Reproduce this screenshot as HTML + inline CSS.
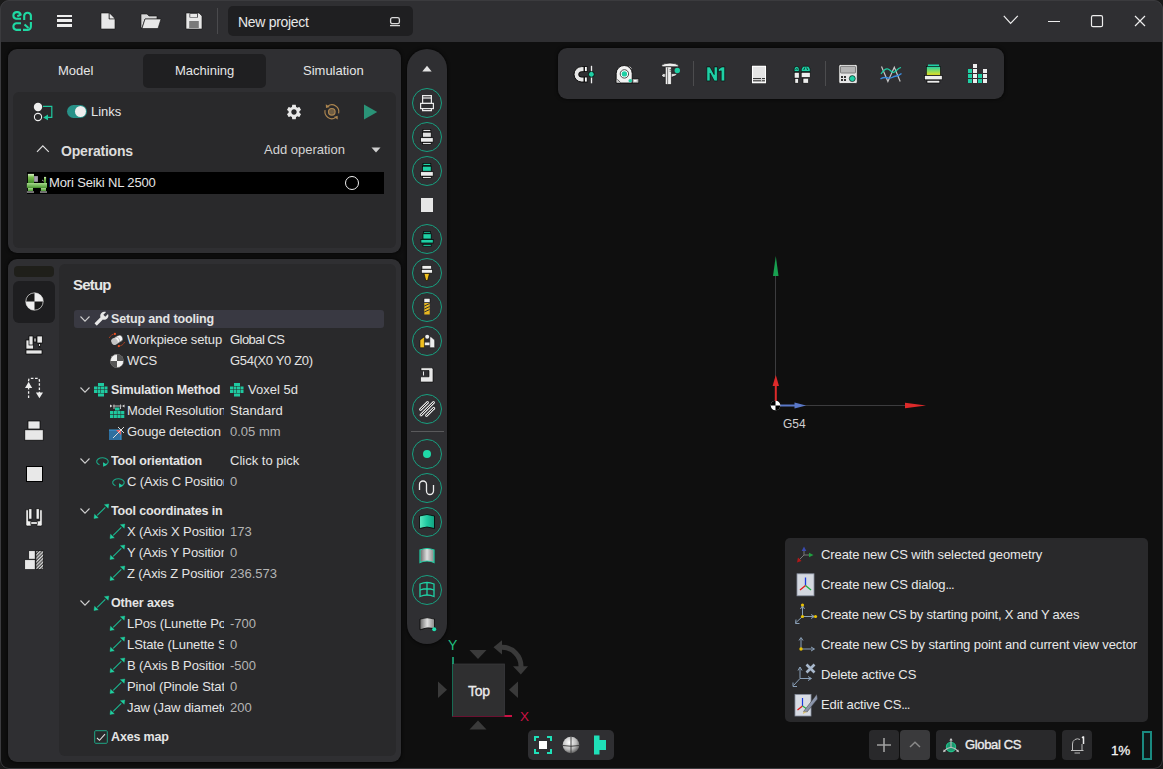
<!DOCTYPE html>
<html><head><meta charset="utf-8">
<style>
*{margin:0;padding:0;box-sizing:border-box}
html,body{width:1163px;height:769px;overflow:hidden;background:#1a1a1a}
body{font-family:"Liberation Sans",sans-serif;color:#e6e6e6;font-size:13px;position:relative}
.a{position:absolute}
#win{position:absolute;left:0;top:0;width:1163px;height:769px;background:#0f0f0f;overflow:hidden;border-radius:9px}
#frame{position:absolute;left:0;top:0;width:1163px;height:769px;border:1px solid #3b3b3e;border-radius:9px;pointer-events:none}
#title{position:absolute;left:0;top:0;width:1163px;height:42px;background:#2f2f32}
.panel{position:absolute;background:#2f2f32;border-radius:9px;box-shadow:0 0 3px 1px rgba(0,0,0,0.55)}
.inner{position:absolute;background:#29292b;border-radius:6px}
.t{position:absolute;white-space:nowrap;line-height:1}
svg{position:absolute;overflow:visible}
.lbl{position:absolute;white-space:nowrap;overflow:hidden;line-height:16px;height:16px;font-size:13px;color:#e4e4e4}
.val{position:absolute;white-space:nowrap;line-height:16px;height:16px;font-size:13px;color:#e4e4e4;left:230px}
.grey{color:#b4b4b4}
.b{font-weight:bold}
</style></head><body>
<div id="win">
 <div id="title">
  <!-- logo -->
  <svg style="left:0;top:0" width="40" height="42" viewBox="0 0 40 42" fill="none" stroke="#1fd9a3" stroke-width="2.1" stroke-linecap="butt">
   <path d="M21,18.8 H16.2 A3.4,3.4 0 0 1 16.2,12.1 H17.6 A3.2,3.2 0 0 1 20.6,14.6 L17.3,16.2"/>
   <path d="M24.2,20 V15.5 A3.4,3.4 0 0 1 30.9,15.5 V20"/>
   <path d="M21,23.2 H16.2 A3.4,3.4 0 0 0 16.2,29.9 H21"/>
   <path d="M30.9,22 V26.5 A3.4,3.4 0 0 1 27.5,29.9 H23"/>
   <path d="M24.5,24.5 L28.5,28"/>
  </svg>
  <!-- hamburger -->
  <div class="a" style="left:57px;top:14.5px;width:15px;height:2.4px;background:#eee"></div>
  <div class="a" style="left:57px;top:19.4px;width:15px;height:2.4px;background:#eee"></div>
  <div class="a" style="left:57px;top:24.3px;width:15px;height:2.4px;background:#eee"></div>
  <!-- file -->
  <svg style="left:100px;top:12px" width="16" height="18" viewBox="0 0 16 18"><path d="M1,1 H9 L15,7 V17 H1 Z" fill="#e8e8e8" stroke="#111" stroke-width="0.6"/><path d="M9,1 V7 H15" fill="#2f2f32" stroke="#111" stroke-width="0.6"/><path d="M9.6,1.5 L14.5,6.4 H9.6 Z" fill="#e8e8e8"/></svg>
  <!-- folder -->
  <svg style="left:140px;top:12px" width="22" height="18" viewBox="0 0 22 18"><path d="M1,2 H7 L9,4 H17 V7 H5 L2,16 H1 Z" fill="#d8d8d8" stroke="#111" stroke-width="0.6"/><path d="M5,7 H21 L18,16.5 H2 Z" fill="#e8e8e8" stroke="#111" stroke-width="0.6"/></svg>
  <!-- save -->
  <svg style="left:185px;top:12px" width="18" height="18" viewBox="0 0 18 18"><path d="M1,1 H14 L17,4 V17 H1 Z" fill="#e8e8e8" stroke="#111" stroke-width="0.6"/><rect x="4.5" y="1.3" width="8.5" height="4.2" fill="#2f2f32"/><rect x="5.2" y="2" width="7" height="3" fill="#e8e8e8"/><rect x="4.2" y="9" width="9.6" height="7" fill="#7a7a7a"/></svg>
  <div class="a" style="left:217px;top:8px;width:1px;height:26px;background:#4a4a4d"></div>
  <div class="a" style="left:228px;top:6px;width:185px;height:30px;background:#1f1f21;border-radius:5px"></div>
  <div class="t" style="left:238px;top:15px;font-size:14px;color:#e8e8e8;letter-spacing:-0.3px">New project</div>
  <svg style="left:389px;top:16px" width="12" height="11" viewBox="0 0 12 11" fill="none" stroke="#d8d8d8" stroke-width="1.3"><rect x="1.6" y="1.6" width="8.8" height="6.1" rx="1.8"/><path d="M1,9.6 H11"/></svg>
  <!-- window controls -->
  <svg style="left:1003px;top:15px" width="16" height="10" viewBox="0 0 16 10" fill="none" stroke="#eee" stroke-width="1.2"><path d="M0.8,0.8 L7.6,8.4 L14.8,0.8"/></svg>
  <div class="a" style="left:1048px;top:21px;width:12px;height:1.2px;background:#eee"></div>
  <svg style="left:1090px;top:15px" width="13" height="13" viewBox="0 0 13 13" fill="none" stroke="#eee" stroke-width="1.2"><rect x="1.5" y="0.7" width="11" height="11" rx="1.5"/></svg>
  <svg style="left:1134px;top:15px" width="12" height="12" viewBox="0 0 12 12" fill="none" stroke="#eee" stroke-width="1.2"><path d="M1,1 L11,11 M11,1 L1,11"/></svg>
 </div>

 <!-- top-left panel -->
 <div class="panel" style="left:8px;top:49px;width:393px;height:204px"></div>
 <div class="a" style="left:143px;top:54px;width:123px;height:34px;background:#1f1f21;border-radius:5px"></div>
 <div class="t" style="left:58px;top:64px;font-size:13px">Model</div>
 <div class="t" style="left:175px;top:64px;font-size:13px">Machining</div>
 <div class="t" style="left:303px;top:64px;font-size:13px">Simulation</div>
 <div class="inner" style="left:13px;top:92px;width:383px;height:156px"></div>
 <!-- links icon -->
 <svg style="left:30px;top:100px" width="24" height="24" viewBox="0 0 24 24">
  <circle cx="8" cy="7" r="4.2" fill="#eee"/>
  <circle cx="8" cy="17" r="3.6" fill="none" stroke="#eee" stroke-width="1.1"/>
  <path d="M13,6.3 H21.8 V17.4 H15" fill="none" stroke="#1fc9a0" stroke-width="1.2"/>
  <path d="M13.2,17.4 L18,14.6 V20.2 Z" fill="#1fc9a0"/>
 </svg>
 <!-- toggle -->
 <div class="a" style="left:67px;top:105px;width:20px;height:13px;border-radius:7px;background:#289188"></div>
 <div class="a" style="left:75px;top:106px;width:11px;height:11px;border-radius:6px;background:#eee"></div>
 <div class="t" style="left:91px;top:105px;font-size:13px">Links</div>
 <!-- gear -->
 <svg style="left:285px;top:103px" width="18" height="18" viewBox="0 0 24 24"><path fill="#e8e8e8" d="M19.14,12.94c0.04-0.3,0.06-0.61,0.06-0.94c0-0.32-0.02-0.64-0.07-0.94l2.03-1.58c0.18-0.14,0.23-0.41,0.12-0.61 l-1.92-3.32c-0.12-0.22-0.37-0.29-0.59-0.22l-2.39,0.96c-0.5-0.38-1.03-0.7-1.62-0.94L14.4,2.81c-0.04-0.24-0.24-0.41-0.48-0.41 h-3.84c-0.24,0-0.43,0.17-0.47,0.41L9.25,5.35C8.66,5.59,8.12,5.92,7.63,6.29L5.24,5.33c-0.22-0.08-0.47,0-0.59,0.22L2.74,8.87 C2.62,9.08,2.66,9.34,2.86,9.48l2.03,1.58C4.84,11.36,4.8,11.69,4.8,12s0.02,0.64,0.07,0.94l-2.03,1.58 c-0.18,0.14-0.23,0.41-0.12,0.61l1.92,3.32c0.12,0.22,0.37,0.29,0.59,0.22l2.39-0.96c0.5,0.38,1.03,0.7,1.62,0.94l0.36,2.54 c0.05,0.24,0.24,0.41,0.48,0.41h3.84c0.24,0,0.44-0.17,0.47-0.41l0.36-2.54c0.59-0.24,1.13-0.56,1.62-0.94l2.39,0.96 c0.22,0.08,0.47,0,0.59-0.22l1.92-3.32c0.12-0.22,0.07-0.47-0.12-0.61L19.14,12.94z M12,15.6c-1.98,0-3.6-1.62-3.6-3.6 s1.62-3.6,3.6-3.6s3.6,1.62,3.6,3.6S13.98,15.6,12,15.6z"/></svg>
 <!-- recycle -->
 <svg style="left:318px;top:98px" width="28" height="28" viewBox="318 98 28 28"><g fill="none" stroke="#ad8650" stroke-width="1.15"><path d="M327.8,106.2 A6.9,6.9 0 0 1 338.6,113.4"/><path d="M325.1,110.2 A6.9,6.9 0 0 0 335.8,117.4"/><circle cx="331.8" cy="111.8" r="3.3" fill="#6e5c42"/></g><path d="M325.8,104.2 L326,108 L329.8,106.9 Z" fill="#ad8650"/><path d="M337.8,119.6 L337.6,115.8 L333.8,116.9 Z" fill="#ad8650"/></svg>
 <!-- play -->
 <svg style="left:363px;top:104px" width="15" height="16" viewBox="0 0 15 16"><path d="M1,0.5 L14.2,8 L1,15.5 Z" fill="#2a9377"/></svg>
 <!-- operations -->
 <svg style="left:36px;top:144px" width="14" height="9" viewBox="0 0 14 9" fill="none" stroke="#ddd" stroke-width="1.2"><path d="M1,7.8 L6.8,1.8 L12.8,7.8"/></svg>
 <div class="t" style="left:61px;top:144px;font-size:14px;font-weight:bold;color:#dcdcdc;letter-spacing:-0.2px">Operations</div>
 <div class="t" style="left:264px;top:143px;font-size:13px;color:#d4d4d4">Add operation</div>
 <svg style="left:371px;top:147px" width="10" height="6" viewBox="0 0 10 6"><path d="M0.5,0.5 H9.5 L5,5.5 Z" fill="#d0d0d0"/></svg>
 <div class="a" style="left:27px;top:172px;width:357px;height:22px;background:#000"></div>
 <!-- machine icon -->
 <svg style="left:26px;top:172px" width="22" height="22" viewBox="26 172 22 22"><defs><linearGradient id="mg" x1="0" y1="0" x2="0" y2="1"><stop offset="0" stop-color="#d8f0c8"/><stop offset="0.35" stop-color="#7cc050"/><stop offset="1" stop-color="#3f8a28"/></linearGradient><linearGradient id="mb" x1="0" y1="0" x2="0" y2="1"><stop offset="0" stop-color="#a8d890"/><stop offset="1" stop-color="#4a9a30"/></linearGradient></defs>
 <rect x="27.9" y="173.9" width="6.1" height="9.2" fill="url(#mg)"/><rect x="34.1" y="176.1" width="3.8" height="5.7" fill="#a8a0b0"/><rect x="44" y="176.9" width="2.1" height="6.1" fill="url(#mg)"/><path d="M42,180 L43.8,181.2" stroke="#ccc" stroke-width="0.8"/>
 <rect x="26.9" y="183" width="20.1" height="4.9" fill="url(#mb)"/><rect x="27.9" y="187.9" width="5.1" height="3.2" fill="url(#mb)"/><rect x="40.9" y="187.9" width="5.1" height="3.2" fill="url(#mb)"/><rect x="26.9" y="191.1" width="7.1" height="1.9" fill="#777"/><rect x="40" y="191.1" width="7" height="1.9" fill="#777"/></svg>
 <div class="t" style="left:49px;top:176px;font-size:13px;letter-spacing:-0.15px">Mori Seiki NL 2500</div>
 <div class="a" style="left:345px;top:176px;width:14px;height:14px;border-radius:50%;border:1.6px solid #f0f0f0"></div>

 <!-- lower-left panel -->
 <div class="panel" style="left:8px;top:259px;width:393px;height:503px"></div>
 <div class="a" style="left:14px;top:266px;width:40px;height:11px;background:#1f1f1a;border-radius:4px"></div>
 <div class="a" style="left:13px;top:281px;width:42px;height:42px;background:#1e1e20;border-radius:6px"></div>
 <div class="inner" style="left:59px;top:264px;width:337px;height:492px"></div>
 <div class="t" style="left:73px;top:277px;font-size:15px;font-weight:bold;letter-spacing:-0.8px">Setup</div>

 <!-- tree -->
 <div class="a" style="left:74px;top:310px;width:310px;height:18px;background:#393942;border-radius:3px"></div>
 <svg style="left:80px;top:315.5px" width="10" height="6" viewBox="0 0 10 6" fill="none" stroke="#cfcfcf" stroke-width="1.1"><path d="M0.5,0.5 L5,5.2 L9.5,0.5"/></svg><svg style="left:94px;top:311px" width="15" height="15" viewBox="0 0 24 24"><path fill="#e8e8e8" d="M22.7,19 l-9.1-9.1 c0.9-2.3,0.4-5-1.5-6.9 c-2-2-5-2.4-7.4-1.3 L9,6 L6,9 L1.6,4.7 C0.4,7.1,0.9,10.1,2.9,12.1 c1.9,1.9,4.6,2.4,6.9,1.5 l9.1,9.1 c0.4,0.4,1,0.4,1.4,0 l2.3-2.3 C23.1,20,23.1,19.3,22.7,19z" transform="translate(24,0) scale(-1,1)"/></svg><div class="lbl b" style="left:111px;top:310.5px;width:113px;font-size:12.5px;letter-spacing:-0.15px">Setup and tooling</div>
 <svg style="left:107px;top:331px" width="20" height="18" viewBox="107 331 20 18"><g transform="rotate(-32 117 340)"><rect x="110.8" y="336.6" width="12.4" height="6.8" rx="3.4" fill="#f4f4f4" stroke="#222" stroke-width="0.5"/><ellipse cx="114.2" cy="340" rx="3" ry="3.4" fill="#c4c4c4"/><path d="M117.2,336.8 A3,3.3 0 0 1 117.2,343.2" fill="none" stroke="#999" stroke-width="0.6"/></g><path d="M109.3,337.8 Q111,334.6 114.6,333.9" fill="none" stroke="#e04a20" stroke-width="1" stroke-dasharray="1.3,0.8"/><circle cx="114.9" cy="333.9" r="1.1" fill="#f05020"/><path d="M124.5,342.2 Q123,345.4 119,346.1" fill="none" stroke="#e04a20" stroke-width="1" stroke-dasharray="1.3,0.8"/><circle cx="118.8" cy="346.1" r="1.1" fill="#f05020"/></svg><div class="lbl" style="left:127px;top:331.5px;width:97px;letter-spacing:-0.1px">Workpiece setup</div><div class="val " style="top:331.5px;letter-spacing:-0.55px">Global CS</div>
 <svg style="left:110px;top:354px" width="14" height="14" viewBox="-10 -10 20 20"><circle r="9.5" fill="#f0f0f0"/><path d="M0,0 H-9.5 A9.5,9.5 0 0 0 0,9.5 Z M0,0 H9.5 A9.5,9.5 0 0 0 0,-9.5 Z" fill="#555"/><path d="M0,0 V-9.5 A9.5,9.5 0 0 0 -9.5,0 Z" fill="#f0f0f0"/><circle r="9.5" fill="none" stroke="#555" stroke-width="0.8"/></svg><div class="lbl" style="left:127px;top:352.5px;width:97px;letter-spacing:-0.1px">WCS</div><div class="val " style="top:352.5px;letter-spacing:-0.35px">G54(X0 Y0 Z0)</div>
 <svg style="left:80px;top:386.5px" width="10" height="6" viewBox="0 0 10 6" fill="none" stroke="#cfcfcf" stroke-width="1.1"><path d="M0.5,0.5 L5,5.2 L9.5,0.5"/></svg><svg style="left:94px;top:383px" width="14" height="14" viewBox="0 0 14 14" fill="#1fc9a0"><path d="M4,0h3v3h-3zM7,0h3v3h-3zM0,3.5h3v3h-3zM3.5,3.5h3v3h-3zM7,3.5h3v3h-3zM10.5,3.5h3v3h-3zM0,7h3v3h-3zM3.5,7h3v3h-3zM7,7h3v3h-3zM10.5,7h3v3h-3zM4,10.5h3v3h-3zM7,10.5h3v3h-3z"/></svg><div class="lbl b" style="left:111px;top:381.5px;width:113px;font-size:12.5px;letter-spacing:-0.15px">Simulation Method</div>
 <svg style="left:230px;top:383px" width="14" height="14" viewBox="0 0 14 14" fill="#1fc9a0"><path d="M4,0h3v3h-3zM7,0h3v3h-3zM0,3.5h3v3h-3zM3.5,3.5h3v3h-3zM7,3.5h3v3h-3zM10.5,3.5h3v3h-3zM0,7h3v3h-3zM3.5,7h3v3h-3zM7,7h3v3h-3zM10.5,7h3v3h-3zM4,10.5h3v3h-3zM7,10.5h3v3h-3z"/></svg><div class="val" style="left:248px;top:381.5px">Voxel 5d</div>
 <svg style="left:110px;top:404px" width="15" height="15" viewBox="0 0 15 15"><path d="M0,0.5 L2.5,2 L0,3.5Z M14.5,0.5 L12,2 L14.5,3.5Z" fill="#ddd"/><path d="M3,2 H11.5 M4,0.5 V5 M10.5,0.5 V5" stroke="#bbb" stroke-width="1"/><rect x="5" y="3.5" width="4.5" height="3" fill="#1fc9a0"/><g fill="#1fc9a0"><rect x="0" y="7" width="3.2" height="3.2"/><rect x="3.7" y="7" width="3.2" height="3.2"/><rect x="7.4" y="7" width="3.2" height="3.2"/><rect x="11.1" y="7" width="3.2" height="3.2"/><rect x="0" y="10.8" width="3.2" height="3.2"/><rect x="3.7" y="10.8" width="3.2" height="3.2"/><rect x="7.4" y="10.8" width="3.2" height="3.2"/><rect x="11.1" y="10.8" width="3.2" height="3.2"/></g></svg><div class="lbl" style="left:127px;top:402.5px;width:97px;letter-spacing:-0.1px">Model Resolution</div><div class="val " style="top:402.5px">Standard</div>
 <svg style="left:109px;top:424px" width="16" height="16" viewBox="0 0 16 16"><rect x="0" y="6" width="12" height="10" fill="#2e6fa0"/><path d="M0,6 H12 V16" fill="none" stroke="#3aa0e0" stroke-width="1"/><path d="M7,6 H12 V11 Z" fill="#e86060"/><path d="M4,14 L15,3 M9,3 L15,9" stroke="#ddd" stroke-width="1"/></svg><div class="lbl" style="left:127px;top:423.5px;width:97px;letter-spacing:-0.1px">Gouge detection</div><div class="val grey" style="top:423.5px">0.05 mm</div>
 <svg style="left:80px;top:457.5px" width="10" height="6" viewBox="0 0 10 6" fill="none" stroke="#cfcfcf" stroke-width="1.1"><path d="M0.5,0.5 L5,5.2 L9.5,0.5"/></svg><svg style="left:95px;top:455.5px" width="13" height="11" viewBox="0 0 13 11" fill="none"><path d="M9.8,9 A5.8,3.8 0 1 0 4.5,8.8" stroke="#1aa585" stroke-width="1.1"/><path d="M8,6.2 L12.2,8.8 L8.2,10.8 Z" fill="#1fc9a0"/></svg><div class="lbl b" style="left:111px;top:452.5px;width:113px;font-size:12.5px;letter-spacing:-0.15px">Tool orientation</div>
 <div class="val" style="top:452.5px">Click to pick</div>
 <svg style="left:111px;top:476.5px" width="13" height="11" viewBox="0 0 13 11" fill="none"><path d="M9.8,9 A5.8,3.8 0 1 0 4.5,8.8" stroke="#1aa585" stroke-width="1.1"/><path d="M8,6.2 L12.2,8.8 L8.2,10.8 Z" fill="#1fc9a0"/></svg><div class="lbl" style="left:127px;top:473.5px;width:97px;letter-spacing:-0.1px">C (Axis C Position)</div><div class="val grey" style="top:473.5px">0</div>
 <svg style="left:80px;top:507.5px" width="10" height="6" viewBox="0 0 10 6" fill="none" stroke="#cfcfcf" stroke-width="1.1"><path d="M0.5,0.5 L5,5.2 L9.5,0.5"/></svg><svg style="left:93.7px;top:503.7px" width="15" height="15" viewBox="0 0 15 15"><path d="M3.2,11.3 L11.3,3.4" stroke="#1ab890" stroke-width="1.1"/><path d="M0,14.5 L0.6,10.3 L4.3,13.8 Z M14.8,0 L14.2,4.3 L10.4,0.7 Z" fill="#1fd0a0" stroke="#1fd0a0" stroke-width="0.4" stroke-linejoin="round"/></svg><div class="lbl b" style="left:111px;top:502.5px;width:113px;font-size:12.5px;letter-spacing:-0.15px">Tool coordinates in '</div>
 <svg style="left:109.7px;top:524.2px" width="15" height="15" viewBox="0 0 15 15"><path d="M3.2,11.3 L11.3,3.4" stroke="#1ab890" stroke-width="1.1"/><path d="M0,14.5 L0.6,10.3 L4.3,13.8 Z M14.8,0 L14.2,4.3 L10.4,0.7 Z" fill="#1fd0a0" stroke="#1fd0a0" stroke-width="0.4" stroke-linejoin="round"/></svg><div class="lbl" style="left:127px;top:523.5px;width:97px;letter-spacing:-0.1px">X (Axis X Position)</div><div class="val grey" style="top:523.5px">173</div>
 <svg style="left:109.7px;top:545.2px" width="15" height="15" viewBox="0 0 15 15"><path d="M3.2,11.3 L11.3,3.4" stroke="#1ab890" stroke-width="1.1"/><path d="M0,14.5 L0.6,10.3 L4.3,13.8 Z M14.8,0 L14.2,4.3 L10.4,0.7 Z" fill="#1fd0a0" stroke="#1fd0a0" stroke-width="0.4" stroke-linejoin="round"/></svg><div class="lbl" style="left:127px;top:544.5px;width:97px;letter-spacing:-0.1px">Y (Axis Y Position)</div><div class="val grey" style="top:544.5px">0</div>
 <svg style="left:109.7px;top:566.2px" width="15" height="15" viewBox="0 0 15 15"><path d="M3.2,11.3 L11.3,3.4" stroke="#1ab890" stroke-width="1.1"/><path d="M0,14.5 L0.6,10.3 L4.3,13.8 Z M14.8,0 L14.2,4.3 L10.4,0.7 Z" fill="#1fd0a0" stroke="#1fd0a0" stroke-width="0.4" stroke-linejoin="round"/></svg><div class="lbl" style="left:127px;top:565.5px;width:97px;letter-spacing:-0.1px">Z (Axis Z Position)</div><div class="val grey" style="top:565.5px">236.573</div>
 <svg style="left:80px;top:599.5px" width="10" height="6" viewBox="0 0 10 6" fill="none" stroke="#cfcfcf" stroke-width="1.1"><path d="M0.5,0.5 L5,5.2 L9.5,0.5"/></svg><svg style="left:93.7px;top:595.7px" width="15" height="15" viewBox="0 0 15 15"><path d="M3.2,11.3 L11.3,3.4" stroke="#1ab890" stroke-width="1.1"/><path d="M0,14.5 L0.6,10.3 L4.3,13.8 Z M14.8,0 L14.2,4.3 L10.4,0.7 Z" fill="#1fd0a0" stroke="#1fd0a0" stroke-width="0.4" stroke-linejoin="round"/></svg><div class="lbl b" style="left:111px;top:594.5px;width:113px;font-size:12.5px;letter-spacing:-0.15px">Other axes</div>
 <svg style="left:109.7px;top:616.2px" width="15" height="15" viewBox="0 0 15 15"><path d="M3.2,11.3 L11.3,3.4" stroke="#1ab890" stroke-width="1.1"/><path d="M0,14.5 L0.6,10.3 L4.3,13.8 Z M14.8,0 L14.2,4.3 L10.4,0.7 Z" fill="#1fd0a0" stroke="#1fd0a0" stroke-width="0.4" stroke-linejoin="round"/></svg><div class="lbl" style="left:127px;top:615.5px;width:97px;letter-spacing:-0.1px">LPos (Lunette Position)</div><div class="val grey" style="top:615.5px">-700</div>
 <svg style="left:109.7px;top:637.2px" width="15" height="15" viewBox="0 0 15 15"><path d="M3.2,11.3 L11.3,3.4" stroke="#1ab890" stroke-width="1.1"/><path d="M0,14.5 L0.6,10.3 L4.3,13.8 Z M14.8,0 L14.2,4.3 L10.4,0.7 Z" fill="#1fd0a0" stroke="#1fd0a0" stroke-width="0.4" stroke-linejoin="round"/></svg><div class="lbl" style="left:127px;top:636.5px;width:97px;letter-spacing:-0.1px">LState (Lunette State)</div><div class="val grey" style="top:636.5px">0</div>
 <svg style="left:109.7px;top:658.2px" width="15" height="15" viewBox="0 0 15 15"><path d="M3.2,11.3 L11.3,3.4" stroke="#1ab890" stroke-width="1.1"/><path d="M0,14.5 L0.6,10.3 L4.3,13.8 Z M14.8,0 L14.2,4.3 L10.4,0.7 Z" fill="#1fd0a0" stroke="#1fd0a0" stroke-width="0.4" stroke-linejoin="round"/></svg><div class="lbl" style="left:127px;top:657.5px;width:97px;letter-spacing:-0.1px">B (Axis B Position)</div><div class="val grey" style="top:657.5px">-500</div>
 <svg style="left:109.7px;top:679.2px" width="15" height="15" viewBox="0 0 15 15"><path d="M3.2,11.3 L11.3,3.4" stroke="#1ab890" stroke-width="1.1"/><path d="M0,14.5 L0.6,10.3 L4.3,13.8 Z M14.8,0 L14.2,4.3 L10.4,0.7 Z" fill="#1fd0a0" stroke="#1fd0a0" stroke-width="0.4" stroke-linejoin="round"/></svg><div class="lbl" style="left:127px;top:678.5px;width:97px;letter-spacing:-0.1px">Pinol (Pinole State)</div><div class="val grey" style="top:678.5px">0</div>
 <svg style="left:109.7px;top:700.2px" width="15" height="15" viewBox="0 0 15 15"><path d="M3.2,11.3 L11.3,3.4" stroke="#1ab890" stroke-width="1.1"/><path d="M0,14.5 L0.6,10.3 L4.3,13.8 Z M14.8,0 L14.2,4.3 L10.4,0.7 Z" fill="#1fd0a0" stroke="#1fd0a0" stroke-width="0.4" stroke-linejoin="round"/></svg><div class="lbl" style="left:127px;top:699.5px;width:97px;letter-spacing:-0.1px">Jaw (Jaw diameter)</div><div class="val grey" style="top:699.5px">200</div>
 <svg style="left:94px;top:730px" width="14" height="14" viewBox="0 0 14 14" fill="none"><rect x="0.7" y="0.7" width="12.6" height="12.6" rx="1" stroke="#1fa585" stroke-width="1"/><path d="M3,8 L5.5,10.3 L11,4.2" stroke="#e0e0e0" stroke-width="1.1"/></svg><div class="lbl b" style="left:111px;top:728.5px;width:113px;font-size:12.5px;letter-spacing:-0.15px">Axes map</div>
 <!-- left icons -->
 <svg style="left:24.5px;top:292.2px" width="19" height="19" viewBox="-10 -10 20 20"><circle r="9.6" fill="#eee"/><path d="M0,0 H-9.6 A9.6,9.6 0 0 1 0,-9.6 Z M0,0 H9.6 A9.6,9.6 0 0 1 0,9.6 Z" fill="#181818"/><circle r="9.2" fill="none" stroke="#ddd" stroke-width="0.9"/><circle r="9.8" fill="none" stroke="#000" stroke-width="0.4"/></svg>
 <svg style="left:25px;top:335px" width="18" height="20" viewBox="25 335 18 20" fill="#e8e8e8" stroke="#000" stroke-width="0.7"><rect x="26" y="340" width="7.5" height="9" /><rect x="29" y="336" width="4" height="9"/><rect x="34" y="338" width="2" height="4"/><rect x="37" y="336" width="5.3" height="7"/><rect x="38.7" y="343.5" width="1.6" height="3.5"/><rect x="26" y="350" width="16" height="4"/></svg>
 <svg style="left:24px;top:377px" width="20" height="22" viewBox="24 377 20 22" fill="none"><path d="M28.6,398 V385 V380.5 Q28.6,378.3 30.8,378.3 H37.2 Q39.4,378.3 39.4,380.5 V393" stroke="#eee" stroke-width="1.3" stroke-dasharray="2.6,1.6"/><path d="M25,388 L28.6,382 L32.2,388 Z M35.9,392.5 L39.4,398.3 L43,392.5 Z" fill="#eee"/></svg>
 <svg style="left:24px;top:420px" width="20" height="21" viewBox="24 420 20 21" fill="#e8e8e8" stroke="#000" stroke-width="0.7"><rect x="28" y="421" width="12" height="8"/><rect x="24.8" y="429.8" width="18.4" height="10.4"/></svg>
 <div class="a" style="left:25.5px;top:465.5px;width:17px;height:16.5px;background:#e8e8e8;border:0.7px solid #000"></div>
 <svg style="left:24px;top:507px" width="20" height="21" viewBox="24 507 20 21"><g fill="#f0f0f0" stroke="#000" stroke-width="0.6"><path d="M25.9,509.8 H28.4 V521 H31.2 V526 H27.4 Q25.9,526 25.9,524.5 Z"/><path d="M42.2,509.8 H39.7 V521 H36.9 V526 H40.7 Q42.2,526 42.2,524.5 Z"/><rect x="28.8" y="508.8" width="3.1" height="10.3"/><rect x="36.1" y="508.8" width="3.1" height="10.3"/><rect x="30.9" y="521.8" width="6.3" height="2.4"/></g></svg>
 <svg style="left:24px;top:550px" width="20" height="20" viewBox="24 550 20 20"><defs><pattern id="hatch" width="2.4" height="2.4" patternUnits="userSpaceOnUse" patternTransform="rotate(45)"><rect width="2.4" height="2.4" fill="#444"/><rect width="1.2" height="2.4" fill="#ddd"/></pattern></defs><rect x="28.8" y="550.8" width="6.3" height="8.3" fill="#e8e8e8" stroke="#000" stroke-width="0.5"/><rect x="24.8" y="559.8" width="10.3" height="9.6" fill="#e8e8e8" stroke="#000" stroke-width="0.5"/><rect x="36" y="550.8" width="7.4" height="18.6" fill="url(#hatch)" stroke="#000" stroke-width="0.5"/></svg>
 <!-- vertical toolbar -->
 <div class="a" style="left:407px;top:49px;width:40px;height:595px;background:#2f2f32;border-radius:20px;box-shadow:0 0 3px 1px rgba(0,0,0,0.55)"></div>
 <svg style="left:422px;top:65px" width="10" height="7" viewBox="0 0 10 7"><path d="M0.3,6.5 L5,0.8 L9.7,6.5Z" fill="#e4e4e4"/></svg>
 <div class="a" style="left:412px;top:88px;width:30px;height:30px;border-radius:50%;border:1.4px solid #17a080"></div>
 <div class="a" style="left:412px;top:122px;width:30px;height:30px;border-radius:50%;border:1.4px solid #17a080"></div>
 <div class="a" style="left:412px;top:156px;width:30px;height:30px;border-radius:50%;border:1.4px solid #17a080"></div>
 <div class="a" style="left:412px;top:224px;width:30px;height:30px;border-radius:50%;border:1.4px solid #17a080"></div>
 <div class="a" style="left:412px;top:258px;width:30px;height:30px;border-radius:50%;border:1.4px solid #17a080"></div>
 <div class="a" style="left:412px;top:292px;width:30px;height:30px;border-radius:50%;border:1.4px solid #17a080"></div>
 <div class="a" style="left:412px;top:326px;width:30px;height:30px;border-radius:50%;border:1.4px solid #17a080"></div>
 <div class="a" style="left:412px;top:394px;width:30px;height:30px;border-radius:50%;border:1.4px solid #17a080"></div>
 <div class="a" style="left:412px;top:439px;width:30px;height:30px;border-radius:50%;border:1.4px solid #17a080"></div>
 <div class="a" style="left:412px;top:473px;width:30px;height:30px;border-radius:50%;border:1.4px solid #17a080"></div>
 <div class="a" style="left:412px;top:507px;width:30px;height:30px;border-radius:50%;border:1.4px solid #17a080"></div>
 <div class="a" style="left:412px;top:575px;width:30px;height:30px;border-radius:50%;border:1.4px solid #17a080"></div>
 <svg style="left:418px;top:93px" width="18" height="20" viewBox="418 93 18 20" fill="none" stroke="#eaeaea" stroke-width="1.2"><path d="M422.6,98 V95.6 H431.4 V98"/><rect x="422.6" y="98" width="8.8" height="5.4"/><rect x="420.6" y="103.4" width="12.8" height="5.2"/><path d="M422.6,108.6 V110.6 H431.4 V108.6"/></svg>
 <svg style="left:418px;top:127px" width="18" height="20" viewBox="418 127 18 20" stroke="#000" stroke-width="0.7"><rect x="423" y="129.5" width="7.8" height="2" fill="#e0e0e0"/><rect x="422.6" y="132.2" width="8.6" height="5" fill="#e0e0e0"/><rect x="420.6" y="137.7" width="12.6" height="4.4" fill="#ececec"/><rect x="422.6" y="142.6" width="8.6" height="1.8" fill="#e0e0e0"/></svg>
 <svg style="left:418px;top:161px" width="18" height="20" viewBox="418 161 18 20" stroke="#000" stroke-width="0.7"><rect x="423" y="163.5" width="7.8" height="2" fill="#1fd0a5"/><rect x="422.6" y="166.2" width="8.6" height="5" fill="#1fd0a5"/><rect x="420.6" y="171.7" width="12.6" height="4.4" fill="#ececec"/><rect x="422.6" y="176.6" width="8.6" height="1.8" fill="#e0e0e0"/></svg>
 <div class="a" style="left:421px;top:198px;width:12px;height:14px;background:#e6e6e6"></div>
 <svg style="left:418px;top:229px" width="18" height="20" viewBox="418 229 18 20" stroke="#000" stroke-width="0.7"><rect x="423.7" y="231.6" width="6.8" height="1.5" fill="#1fd0a5"/><rect x="423" y="233.8" width="8.2" height="5.2" fill="#1fd0a5"/><rect x="420.9" y="239.6" width="12.3" height="3.4" fill="#1fd0a5"/><rect x="423" y="244.3" width="8.2" height="1.9" fill="#1fd0a5"/></svg>
 <svg style="left:421px;top:265px" width="12" height="16" viewBox="0 0 12 16" stroke="#000" stroke-width="0.6"><rect x="1" y="0.5" width="9.5" height="3.6" fill="#eee"/><rect x="0.4" y="4.5" width="11" height="3.6" fill="#eee"/><path d="M3,8.5 H8.5 L6.6,15.5 H4.8 Z" fill="#f0c020"/></svg>
 <svg style="left:423px;top:298px" width="8" height="17" viewBox="0 0 8 17"><rect x="1" y="0.3" width="6" height="4.2" fill="#eee" stroke="#000" stroke-width="0.5"/><rect x="1.3" y="5" width="5.4" height="11.5" fill="#e8b820"/><path d="M1.3,8 L6.7,5.5 M1.3,11 L6.7,8.5 M1.3,14 L6.7,11.5" stroke="#333" stroke-width="1"/></svg>
 <svg style="left:418px;top:333px" width="18" height="16" viewBox="418 333 18 16"><path d="M420,347.7 V340 L424.4,336.8 V347.7 Z" fill="#f0c020" stroke="#000" stroke-width="0.5"/><path d="M429.8,336.8 H431 L434.7,340 V347.7 H429.8 Z" fill="#eee" stroke="#000" stroke-width="0.5"/><circle cx="427.2" cy="336.7" r="2" fill="#eee"/><rect x="424.8" y="342.5" width="4.7" height="2.7" fill="#eee"/></svg>
 <svg style="left:420px;top:367px" width="14" height="16" viewBox="420 367 14 16"><path d="M421,367.8 H431.5 Q433,367.8 433,369.3 V382 H421.3 Q420.5,382 420.5,381 V376.8 H429 V370.5 H421 Z" fill="#e8e8e8" stroke="#000" stroke-width="0.6"/><path d="M423.5,371.5 V375.5" stroke="#e8e8e8" stroke-width="1"/></svg>
 <svg style="left:418px;top:400px" width="18" height="18" viewBox="418 400 18 18" fill="none" stroke-linecap="round"><g stroke="#e4e4e4" stroke-width="2.8"><path d="M420.5,409.5 L427.5,402.5"/><path d="M421,415 L433.5,402.5"/><path d="M426.5,415.5 L433.8,408.2"/></g><g stroke="#2a2a2a" stroke-width="1"><path d="M420.5,409.5 L427.5,402.5"/><path d="M421,415 L433.5,402.5"/><path d="M426.5,415.5 L433.8,408.2"/></g></svg>
 <div class="a" style="left:411px;top:431px;width:33px;height:1px;background:#5a5a5c"></div>
 <div class="a" style="left:423px;top:450px;width:8px;height:8px;border-radius:50%;background:#1fd9a8"></div>
 <svg style="left:418px;top:478px" width="18" height="20" viewBox="0 0 18 20" fill="none" stroke="#eee" stroke-width="1.3"><path d="M1.5,12 V6.5 A3.5,3.5 0 0 1 8.5,6.5 V13 A3.5,3.5 0 0 0 15.5,13 V7"/></svg>
 <svg style="left:418px;top:513px" width="18" height="18" viewBox="0 0 18 18"><defs><linearGradient id="gt" x1="0" x2="1"><stop offset="0" stop-color="#5fe8c0"/><stop offset="0.5" stop-color="#1fc9a0"/><stop offset="1" stop-color="#12a080"/></linearGradient></defs><path d="M1.5,3 Q9,0 16.5,3 V15.5 Q9,12.5 1.5,15.5 Z" fill="url(#gt)" stroke="#000" stroke-width="0.8"/></svg>
 <svg style="left:418px;top:547px" width="18" height="18" viewBox="0 0 18 18"><defs><linearGradient id="gg" x1="0" x2="1"><stop offset="0" stop-color="#666"/><stop offset="0.5" stop-color="#e0e0e0"/><stop offset="1" stop-color="#888"/></linearGradient></defs><path d="M2,3 Q9,0 16,3 V15.5 Q9,12.5 2,15.5 Z" fill="url(#gg)" stroke="#1fd0a5" stroke-width="1.2"/></svg>
 <svg style="left:418px;top:581px" width="18" height="18" viewBox="0 0 18 18" fill="none" stroke="#1fd0a5" stroke-width="1.3"><path d="M2,3 Q9,0 16,3 V15.5 Q9,12.5 2,15.5 Z"/><path d="M9,1.5 V14 M2,9 Q9,6.5 16,9"/></svg>
 <svg style="left:419px;top:617px" width="18" height="16" viewBox="0 0 18 16"><path d="M1,2 Q8,-0.5 15.5,2 V11.5 Q8,9.5 1,12.8 Z" fill="url(#gg)" stroke="#000" stroke-width="0.7"/><circle cx="15.2" cy="12.2" r="2" fill="#1fe0b0"/></svg>

 <!-- top toolbar -->
 <div class="a" style="left:558px;top:48px;width:446px;height:51px;background:#2f2f32;border-radius:9px;box-shadow:0 0 3px 1px rgba(0,0,0,0.5)"></div>
 <div class="a" style="left:693px;top:61px;width:1px;height:25px;background:#4c4c4e"></div>
 <div class="a" style="left:825px;top:61px;width:1px;height:25px;background:#4c4c4e"></div>
 <svg style="left:572px;top:64px" width="24" height="21" viewBox="572 64 24 21"><path d="M584,66.6 H581.7 A7.7,7.7 0 0 0 581.7,82 H584 V77.1 H581.4 A2.7,2.7 0 0 1 581.4,71.7 H584 Z" fill="#e6e6e6" stroke="#000" stroke-width="0.9"/><rect x="584.6" y="66.6" width="2.6" height="5" fill="#fff" stroke="#000" stroke-width="0.8"/><rect x="584.6" y="77" width="2.6" height="5" fill="#fff" stroke="#000" stroke-width="0.8"/><path d="M591.5,65.8 V83.3" stroke="#eee" stroke-width="1.3"/><circle cx="591.4" cy="74.3" r="2.9" fill="#1fd0a5" stroke="#000" stroke-width="0.8"/></svg>
 <svg style="left:614px;top:63px" width="27" height="22" viewBox="614 63 27 22"><path d="M616.2,83 V73.5 A8,8 0 0 1 632.2,73.5 V83 Z" fill="#f2f2f2" stroke="#000" stroke-width="0.8"/><path d="M616.6,80 L617.4,79.3 L620.6,82.6 H616.6 Z" fill="#c8c8c8"/><path d="M617.4,79.3 L620.6,82.6" stroke="#333" stroke-width="0.7"/><circle cx="624.4" cy="73.9" r="4.2" fill="#fff" stroke="#222" stroke-width="0.8"/><circle cx="624.4" cy="73.9" r="2.7" fill="#1fd0a5"/><path d="M629.6,66.5 L631.6,68.6" stroke="#bbb" stroke-width="1"/><rect x="632.2" y="78.8" width="6.6" height="4.2" fill="#bbb" stroke="#000" stroke-width="0.6"/><rect x="634" y="80" width="2.6" height="1.6" fill="#fff"/><circle cx="630.3" cy="80.7" r="1.8" fill="#1fd0a5"/></svg>
 <svg style="left:660px;top:62px" width="21" height="24" viewBox="660 62 21 24"><path d="M661.3,65.5 Q664,63.1 670,63.1 Q676,63.1 678.6,65.5 V66.8 H662.5 Z" fill="#eee" stroke="#000" stroke-width="0.6"/><path d="M661.6,75.5 L663,73.6 H677.6 L675.5,75.8 L671.4,77.3 H663 Z" fill="#ddd" stroke="#000" stroke-width="0.6"/><rect x="665.3" y="66.8" width="6.1" height="17.8" rx="0.8" fill="#eee" stroke="#000" stroke-width="0.6"/><path d="M667.6,67.5 V84 M669.5,69.5 H671.4 M669.5,71.2 H671.4" stroke="#444" stroke-width="0.7"/><circle cx="677.3" cy="70.5" r="2.7" fill="#1fd0a5"/></svg>
 <svg style="left:705px;top:65px" width="22" height="18" viewBox="705 65 22 18"><path d="M706.8,80.9 V66.9 H710 L714.2,74.6 V66.9 H717.4 V80.9 H714.3 L710.1,73.2 V80.9 Z M721.2,80.9 V70.8 L718.4,71.8 V69.1 L721.9,66.9 H724.7 V80.9 Z" fill="#1fd0a5" stroke="#000" stroke-width="0.6"/></svg>
 <svg style="left:751px;top:65px" width="16" height="19" viewBox="0 0 16 19"><rect x="0.8" y="0.6" width="14.4" height="17.8" fill="#e4e4e4" stroke="#000" stroke-width="0.6"/><rect x="1.5" y="1.3" width="13" height="16.4" fill="none" stroke="#fff" stroke-width="1.1"/><path d="M2,13.6 H14 M2,15.8 H14" stroke="#111" stroke-width="0.9"/><path d="M10,13.6 H11 M10,15.8 H11" stroke="#fff" stroke-width="0.9"/></svg>
 <svg style="left:793px;top:65px" width="19" height="19" viewBox="793 65 19 19"><g stroke="#000" stroke-width="0.6"><path d="M794.2,71.5 V69 Q794.2,66.5 796.5,66.5 H797 Q799.2,66.5 799.2,69 V71.5 Z" fill="#1fd0a5"/><path d="M801.3,71.5 V69 L803,66.3 H808.5 L810.2,69 V71.5 Z" fill="#1fd0a5"/><rect x="794.2" y="72.3" width="5" height="5.8" fill="#eee"/><rect x="801.2" y="72.3" width="9" height="5.2" fill="#eee"/><rect x="794.9" y="78.6" width="3.6" height="4.6" fill="#eee"/><rect x="803" y="78.2" width="5.6" height="5" fill="#eee"/></g><path d="M795.5,69.5 Q796.8,68 798,69.5 M803.8,70 L804.8,67.5 M807.6,70 L806.6,67.5" stroke="#000" stroke-width="0.7" fill="none"/></svg>
 <svg style="left:838px;top:64px" width="20" height="20" viewBox="0 0 20 20"><rect x="0.8" y="0.5" width="18.5" height="19" rx="1.5" fill="#e6e6e6" stroke="#000" stroke-width="0.6"/><rect x="2.5" y="2.3" width="15" height="6.8" rx="0.8" fill="#b4b4b4" stroke="#333" stroke-width="0.5"/><g fill="#333"><rect x="3" y="12" width="2" height="2"/><rect x="6" y="12" width="2" height="2"/><rect x="3" y="15" width="2" height="2"/><rect x="6" y="15" width="2" height="2"/></g><circle cx="14.3" cy="14.6" r="3" fill="#1fd0a5" stroke="#000" stroke-width="0.6"/></svg>
 <svg style="left:880px;top:66px" width="23" height="17" viewBox="0 0 23 17" fill="none"><path d="M1.5,0.5 L7.9,15.4 L14.3,1.2 L20.2,15.4" stroke="#c8c8c8" stroke-width="1.2"/><path d="M1,8 C3,5 5,2 8,3 S12,7.5 14.5,6 S18,2 21,1.5" stroke="#1fd0a5" stroke-width="1.2"/><path d="M0.5,12.8 Q4,11 7,11.8 T12,11.5 T16.5,10 T21.5,7.5" stroke="#3a8de0" stroke-width="1.4"/></svg>
 <svg style="left:924px;top:64px" width="20" height="20" viewBox="0 0 20 20"><defs><linearGradient id="gy" x1="0" y1="0" x2="0" y2="1"><stop offset="0" stop-color="#1fd0a5"/><stop offset="1" stop-color="#e8e020"/></linearGradient></defs><rect x="4" y="0.5" width="11" height="1.8" fill="#1fd0a5"/><rect x="2.5" y="2.6" width="13.8" height="8.6" fill="url(#gy)" stroke="#000" stroke-width="0.5"/><rect x="0.6" y="11.6" width="17.6" height="4.2" fill="#eee" stroke="#000" stroke-width="0.6"/><rect x="3" y="16.4" width="12.8" height="2.6" fill="#eee" stroke="#000" stroke-width="0.6"/></svg>
 <svg style="left:967px;top:63px" width="22" height="22" viewBox="967 63 22 22"><rect x="968" y="69" width="4" height="4" fill="#1fd0a5"/><rect x="968" y="74" width="4" height="4" fill="#1fd0a5"/><rect x="968" y="79" width="4" height="4" fill="#1fd0a5"/><rect x="973" y="64" width="4" height="4" fill="#eee"/><rect x="973" y="69" width="4" height="4" fill="#eee"/><rect x="973" y="74" width="4" height="4" fill="#eee"/><rect x="973" y="79" width="4" height="4" fill="#eee"/><rect x="978" y="74" width="4" height="4" fill="#1fd0a5"/><rect x="978" y="79" width="4" height="4" fill="#1fd0a5"/><rect x="983" y="69" width="4" height="4" fill="#eee"/><rect x="983" y="74" width="4" height="4" fill="#eee"/><rect x="983" y="79" width="4" height="4" fill="#eee"/></svg>

 <!-- viewport -->
 <svg style="left:0;top:0" width="1163" height="769" viewBox="0 0 1163 769">
 <path d="M775.5,272 V405" stroke="#3c3c3e" stroke-width="1"/>
 <path d="M776,405.5 H908" stroke="#3c3c3e" stroke-width="1"/>
 <path d="M775.8,256 L778.5,276 H773 Z" fill="#18a050"/>
 <path d="M775.8,375 L779,386 H772.6 Z" fill="#dd2a2a"/>
 <path d="M775.8,385 V401" stroke="#dd2a2a" stroke-width="2"/>
 <path d="M780,405.5 H796" stroke="#5a78c8" stroke-width="2"/>
 <path d="M806,405.5 L794.5,402.5 V408.5 Z" fill="#5a78c8"/>
 <path d="M926,405.5 L905,402.8 V408.3 Z" fill="#dd2a2a"/>
 <circle cx="775.5" cy="405.5" r="4.8" fill="#fff"/>
 <path d="M775.5,405.5 H770.7 A4.8,4.8 0 0 1 775.5,400.7 Z M775.5,405.5 H780.3 A4.8,4.8 0 0 1 775.5,410.3 Z" fill="#000"/>
</svg>
 <div class="t" style="left:783px;top:418px;font-size:12px;color:#cfcfcf">G54</div>
 <svg style="left:0;top:0" width="1163" height="769" viewBox="0 0 1163 769">
 <rect x="452.5" y="664" width="52" height="52.5" fill="#2f2f30" stroke="#3a3a3c" stroke-width="0.8"/>
 <path d="M452.5,663.5 V716.5" stroke="#176a52" stroke-width="1"/>
 <path d="M453,657 V664" stroke="#1fb080" stroke-width="1.6"/>
 <path d="M452.5,716.5 H505" stroke="#6a1030" stroke-width="1.1"/>
 <path d="M504.5,716 H512" stroke="#cc1144" stroke-width="2"/>
 <path d="M469.5,650 H486.5 L478,659 Z" fill="#3a3a3a"/>
 <path d="M469.5,729.5 H486.5 L478,720.5 Z" fill="#3a3a3a"/>
 <path d="M438,681.5 V698 L447,689.75 Z" fill="#3a3a3a"/>
 <path d="M518,681.5 V698 L509,689.75 Z" fill="#3a3a3a"/>
 <path d="M501.5,647.3 A19,19 0 0 1 521,667" fill="none" stroke="#3a3a3a" stroke-width="5"/>
 <path d="M493.5,647.3 L502,640.2 V654.5 Z" fill="#3a3a3a"/>
 <path d="M520.8,674.6 L513,666.2 H528 Z" fill="#3a3a3a"/>
</svg>
 <div class="t" style="left:448px;top:638px;font-size:14px;color:#1fc080">Y</div>
 <div class="t" style="left:520px;top:710px;font-size:13.5px;color:#cc1144">X</div>
 <div class="t" style="left:468px;top:684px;font-size:14px;color:#ececec;letter-spacing:-0.3px;-webkit-text-stroke:0.3px #ececec">Top</div>
 <div class="a" style="left:528px;top:730px;width:86px;height:30px;background:#2f2f32;border-radius:5px"></div>
 <svg style="left:534px;top:736px" width="18" height="18" viewBox="0 0 18 18" fill="none" stroke="#1fe0b8" stroke-width="2"><path d="M1,5 V1 H5 M13,1 H17 V5 M17,13 V17 H13 M5,17 H1 V13"/><rect x="5" y="5" width="8" height="8" fill="#fff" stroke="none"/></svg>
 <svg style="left:562px;top:736px" width="18" height="18" viewBox="0 0 18 18"><defs><radialGradient id="sph" cx="0.4" cy="0.35" r="0.7"><stop offset="0" stop-color="#fff"/><stop offset="0.6" stop-color="#bbb"/><stop offset="1" stop-color="#555"/></radialGradient></defs><circle cx="9" cy="9" r="8.3" fill="url(#sph)"/><path d="M0.7,9.5 Q9,11 17.3,9.5 M9,0.7 V17.3" stroke="#333" stroke-width="0.9" fill="none"/></svg>
 <svg style="left:593px;top:735px" width="14" height="20" viewBox="0 0 14 20"><path d="M1,0.5 H6.5 V5 H13 V15 H6.5 V19.5 H1 Z" fill="#1fe0b8"/></svg>
 <div class="a" style="left:785px;top:538px;width:363px;height:184px;background:#29292b;border-radius:5px"></div>
 <div class="t" style="left:821px;top:548px;font-size:13px;color:#e8e8e8;letter-spacing:-0.1px">Create new CS with selected geometry</div>
 <div class="t" style="left:821px;top:578px;font-size:13px;color:#e8e8e8;letter-spacing:-0.1px">Create new CS dialog<span style="letter-spacing:-0.9px">...</span></div>
 <div class="t" style="left:821px;top:608px;font-size:13px;color:#e8e8e8;letter-spacing:-0.21px">Create new CS by starting point, X and Y axes</div>
 <div class="t" style="left:821px;top:638px;font-size:13px;color:#e8e8e8;letter-spacing:-0.1px">Create new CS by starting point and current view vector</div>
 <div class="t" style="left:821px;top:668px;font-size:13px;color:#e8e8e8;letter-spacing:-0.1px">Delete active CS</div>
 <div class="t" style="left:821px;top:698px;font-size:13px;color:#e8e8e8;letter-spacing:-0.1px">Edit active CS<span style="letter-spacing:-0.9px">...</span></div>
 <svg style="left:796px;top:546px" width="18" height="18" viewBox="796 546 18 18"><path d="M804,555 V549 M804,555 H810 M804,555 L799,560" stroke="#777" stroke-width="1"/><path d="M804,546.5 L806.3,551 H801.7Z" fill="#3a4ab0"/><path d="M813.5,555 L809,552.7 V557.3Z" fill="#20a040"/><path d="M797,562.5 L798,557.5 L801.5,561Z" fill="#b01818"/></svg>
 <svg style="left:796px;top:573px" width="19" height="24" viewBox="0 0 19 24"><rect x="1" y="0.8" width="17" height="22" fill="#d4d8e0" stroke="#8890a0" stroke-width="0.8"/><path d="M9.5,12.5 V4.5" stroke="#1a3ae0" stroke-width="1.3"/><path d="M9.5,12.5 L4,17" stroke="#e01a1a" stroke-width="1.3"/><path d="M9.5,12.5 L15,17" stroke="#20b040" stroke-width="1.3"/></svg>
 <svg style="left:794px;top:602px" width="24" height="24" viewBox="0 0 24 24" fill="none" stroke="#8aa0b8" stroke-width="1"><path d="M8.5,14.5 V3.5 M8.5,14.5 H20 M8.5,14.5 L2,20.5"/><path d="M6.5,7 L8.5,3.5 L10.5,7 M17,12.5 L20.5,14.5 L17,16.5 M2,17.5 L1.5,21.5 L5.5,21.5"/><circle cx="8.5" cy="3" r="1.6" fill="#e8c000" stroke="none"/><circle cx="8.5" cy="14.5" r="1.6" fill="#e8c000" stroke="none"/><circle cx="21.5" cy="14.5" r="1.6" fill="#e8c000" stroke="none"/></svg>
 <svg style="left:798px;top:636px" width="18" height="17" viewBox="0 0 18 17" fill="none" stroke="#8aa0b8" stroke-width="1"><path d="M3,13 V2 M3,13 H16"/><path d="M1,4.5 L3,1.5 L5,4.5 M13,11 L16.5,13 L13,15"/><circle cx="3" cy="13" r="1.7" fill="#e8c000" stroke="none"/></svg>
 <svg style="left:792px;top:662px" width="26" height="27" viewBox="0 0 26 27"><path d="M8,16.5 V5.5 M8,16.5 H19 M8,16.5 L1.5,23.5" stroke="#8aa0b8" stroke-width="1" fill="none"/><path d="M6,8.5 L8,5 L10,8.5 M16,14.5 L19.5,16.5 L16,18.5 M1,20.5 L1,24.5 L5,24.5" stroke="#8aa0b8" stroke-width="1" fill="none"/><path d="M14.5,2.5 L22.5,10.5 M22.5,2.5 L14.5,10.5" stroke="#a8b8cc" stroke-width="2.6"/></svg>
 <svg style="left:794px;top:693px" width="24" height="24" viewBox="0 0 24 24"><rect x="1" y="1.5" width="16" height="21.5" fill="#d8dce4" stroke="#8890a0" stroke-width="0.8"/><path d="M8.5,13 V5" stroke="#1a3ae0" stroke-width="1.2"/><path d="M8.5,13 L3.5,17" stroke="#e01a1a" stroke-width="1.2"/><path d="M8.5,13 L13,16" stroke="#20b040" stroke-width="1.2"/><defs><linearGradient id="pen" x1="0" y1="0" x2="1" y2="1"><stop offset="0" stop-color="#c8d0e0"/><stop offset="1" stop-color="#5a6580"/></linearGradient></defs><path d="M9.5,18.5 L20,5 L22.8,1.2 L23.6,6 L13.2,18.8 Z" fill="url(#pen)" stroke="#333" stroke-width="0.5"/><path d="M8.8,21 L9.5,18.5 L13.2,18.8 Z" fill="#d8c070"/></svg>
 <div class="a" style="left:869px;top:730px;width:30px;height:30px;background:#29292b;border-radius:4px"></div>
 <svg style="left:876px;top:737px" width="16" height="16" viewBox="0 0 16 16"><path d="M8,1 V15 M1,8 H15" stroke="#a0a0a0" stroke-width="1.6"/></svg>
 <div class="a" style="left:900px;top:730px;width:30px;height:30px;background:#3a3a3c;border-radius:4px"></div>
 <svg style="left:909px;top:741px" width="12" height="7" viewBox="0 0 12 7" fill="none"><path d="M1,6 L6,1.2 L11,6" stroke="#8a8a8a" stroke-width="1.4"/></svg>
 <div class="a" style="left:936px;top:730px;width:120px;height:30px;background:#29292b;border-radius:4px"></div>
 <svg style="left:940px;top:735px" width="22" height="20" viewBox="940 735 22 20"><path d="M946.3,744.8 L951,742 L955.7,744.8 V749.5 L951,752.2 L946.3,749.5 Z" fill="#1a9a70"/><circle cx="951" cy="747" r="4.6" fill="none" stroke="#22c08a" stroke-width="1.2"/><path d="M951,739.5 V747.3 M951,747.3 Q947,748 944,751 M951,747.3 Q955,748 958,751" stroke="#bbb" stroke-width="1.1" fill="none"/><path d="M949.3,740.5 L951,738 L952.7,740.5 Z M943,752.2 L943.8,749.4 L946,751.2 Z M959,752.2 L958.2,749.4 L956,751.2 Z" fill="#ccc"/></svg>
 <div class="t" style="left:965px;top:738px;font-size:13px;color:#ececec;letter-spacing:-0.35px;-webkit-text-stroke:0.35px #ececec">Global CS</div>
 <div class="a" style="left:1062px;top:730px;width:30px;height:30px;background:#29292b;border-radius:4px"></div>
 <svg style="left:1068px;top:735px" width="20" height="20" viewBox="0 0 20 20" fill="none" stroke="#bbb" stroke-width="1"><path d="M3,15.5 H15.5 M4.5,15 V9 A5,5 0 0 1 12,4.5 M14,9 V15 M6.5,18 H12"/><path d="M15.5,1.5 V9" stroke="#eee" stroke-width="1.5"/><path d="M14,3 L15.5,1.5" stroke="#eee" stroke-width="1.2"/></svg>
 <div class="t" style="left:1111px;top:744px;font-size:13.5px;color:#f2f2f2;letter-spacing:-0.3px;-webkit-text-stroke:0.3px #f2f2f2">1%</div>
 <div class="a" style="left:1142px;top:731px;width:10px;height:28.5px;border:2px solid #1a8a80;background:#101818"></div>
</div>
<div id="frame"></div>
</body></html>
